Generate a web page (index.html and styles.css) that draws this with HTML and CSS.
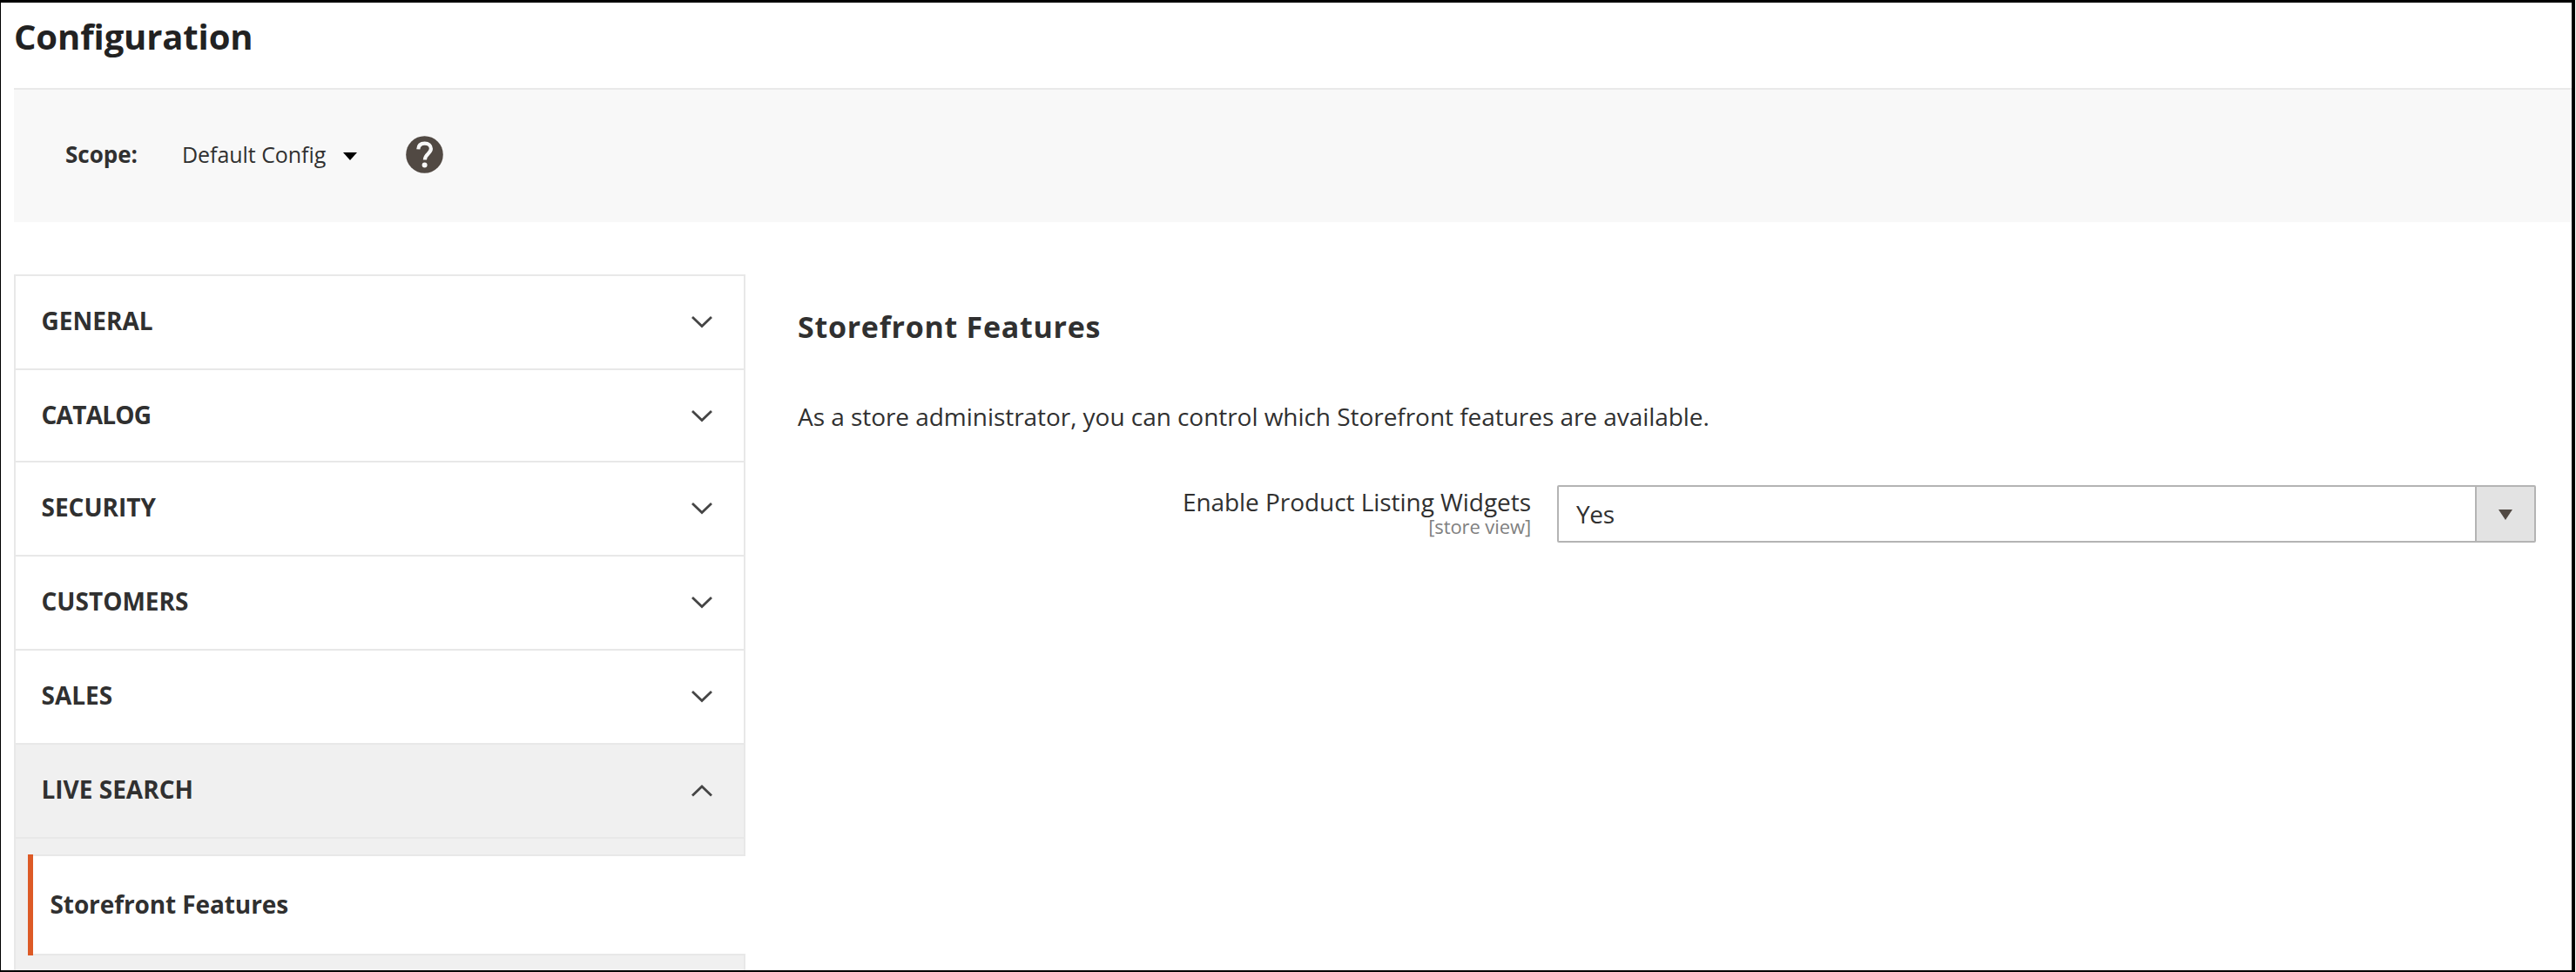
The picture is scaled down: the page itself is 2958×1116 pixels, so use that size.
FILE: index.html
```html
<!DOCTYPE html>
<html lang="en">
<head>
<meta charset="utf-8">
<title>Configuration</title>
<link rel="stylesheet" href="styles.css">
</head>
<body>
<div class="frame">
  <h1 class="page-title">Configuration</h1>
  <div class="scope-bar">
    <span class="scope-label">Scope:</span>
    <span class="scope-value">Default Config</span>
    <svg class="scope-caret" width="16" height="9" viewBox="0 0 16 9"><path d="M0 0h16L8 9z" fill="#000"/></svg>
    <svg class="help" width="43" height="43" viewBox="0 0 43 43"><circle cx="21.5" cy="21.5" r="21.3" fill="#514943"/><path d="M14.3 15.3C14.5 10.6 17.6 8.6 21.7 8.6c4.2 0 7.2 2.5 7.2 6.2 0 5.4-7 6.1-7 12.6" fill="none" stroke="#f8f8f8" stroke-width="4.2"/><circle cx="21.6" cy="33.5" r="3" fill="#f8f8f8"/></svg>
  </div>
  <div class="columns">
    <nav class="sidebar">
      <div class="tab"><span>GENERAL</span><svg class="chevron" width="26" height="16" viewBox="0 0 26 16"><path d="M2 2l11 10.500L24 2"/></svg></div>
      <div class="tab short"><span class="tight">CATALOG</span><svg class="chevron" width="26" height="16" viewBox="0 0 26 16"><path d="M2 2l11 10.500L24 2"/></svg></div>
      <div class="tab"><span>SECURITY</span><svg class="chevron" width="26" height="16" viewBox="0 0 26 16"><path d="M2 2l11 10.500L24 2"/></svg></div>
      <div class="tab"><span>CUSTOMERS</span><svg class="chevron" width="26" height="16" viewBox="0 0 26 16"><path d="M2 2l11 10.500L24 2"/></svg></div>
      <div class="tab"><span>SALES</span><svg class="chevron" width="26" height="16" viewBox="0 0 26 16"><path d="M2 2l11 10.500L24 2"/></svg></div>
      <div class="tab open"><span>LIVE SEARCH</span><svg class="chevron" width="26" height="16" viewBox="0 0 26 16"><path d="M2 13.500l11-10.500 11 10.500"/></svg></div>
      <div class="gap top"></div>
      <div class="sub"><div class="item"><span>Storefront Features</span></div></div>
      <div class="gap bottom"></div>
    </nav>
    <main class="content">
      <h2 class="section-title">Storefront Features</h2>
      <p class="intro">As a store administrator, you can control which Storefront features are available.</p>
      <div class="field">
        <div class="field-label"><span class="name">Enable Product Listing Widgets</span><span class="hint">[store view]</span></div>
        <div class="select"><div class="select-value">Yes</div><div class="select-button"><svg width="16" height="12" viewBox="0 0 16 12"><path d="M0 0h16L8 12z" fill="#514943"/></svg></div></div>
      </div>
    </main>
  </div>
</div>
</body>
</html>
```

FILE: styles.css
```css
* { box-sizing: border-box; }
body {
  margin: 0;
  background: #fff;
  color: #303030;
  font-family: "Open Sans", "Noto Sans", sans-serif;
}
.frame {
  width: 2957px;
  height: 1116px;
  overflow: hidden;
  border: solid #000;
  border-width: 3px 4px 2px 1px;
  padding-left: 15px;
}
.page-title {
  margin: 0;
  height: 98px;
  padding-top: 12px;
  font-size: 40px;
  font-weight: 700;
  letter-spacing: -0.12px;
  line-height: 54px;
  color: #222;
}
.scope-bar {
  display: flex;
  align-items: center;
  height: 154px;
  padding: 0 0 3px 59px;
  background: #f8f8f8;
  border-top: 2px solid #e9e9e9;
  font-size: 25px;
  line-height: 34px;
}
.scope-label { width: 134px; padding-bottom: 1px; font-size: 26px; font-weight: 700; }
.scope-value { width: 185px; padding-bottom: 2px; letter-spacing: -0.05px; }
.scope-caret { margin-top: 3px; }
.help { margin-left: 56px; }
.columns { display: flex; padding-top: 60px; }
.sidebar { width: 840px; border: 2px solid #e8e8e8; border-bottom: 0; border-right: 0; }
.tab {
  display: flex;
  align-items: center;
  justify-content: space-between;
  height: 108px;
  padding: 0 35.5px 4px 29.5px;
  border-bottom: 2px solid #e8e8e8;
  border-right: 2px solid #e8e8e8;
  font-size: 28px;
  font-weight: 700;
}
.short { height: 106px; padding-bottom: 2px; }
.tight { letter-spacing: -0.75px; }
.open, .gap { background: #f0f0f0; }
.chevron { margin-top: 3px; }
.chevron path { fill: none; stroke: #454545; stroke-width: 2.8; }
.gap { border-right: 2px solid #e8e8e8; height: 20px; }
.gap.top { border-bottom: 2px solid #e8e8e8; border-bottom-right-radius: 2px; }
.gap.bottom { border-top: 2px solid #e8e8e8; border-top-right-radius: 2px; }
.sub { padding-left: 14px; background: #f0f0f0; margin: -2px 0; position: relative; }
.item {
  display: flex;
  align-items: center;
  height: 116px;
  padding: 0 0 2px 19.5px;
  background: linear-gradient(#e8e8e8 2px, #fff 2px 114px, #e8e8e8 114px);
  border-left: 6px solid #dd5a26;
  font-size: 28px;
  font-weight: 700;
  letter-spacing: -0.1px;
}
.content { width: 2057px; padding-left: 60px; }
.section-title {
  margin: 0;
  padding-top: 35px;
  font-size: 34px;
  font-weight: 700;
  letter-spacing: 0.72px;
  line-height: 50px;
}
.intro { margin: 59px 0 0; font-size: 28px; letter-spacing: -0.045px; line-height: 38px; }
.field { display: flex; margin-top: 60px; }
.field-label { width: 842px; text-align: right; }
.name, .hint { display: block; }
.name { padding-top: 1px; font-size: 28px; letter-spacing: -0.05px; line-height: 36px; }
.hint { font-size: 22px; letter-spacing: -0.1px; line-height: 20px; color: #808080; }
.select {
  display: flex;
  width: 1124px;
  height: 66px;
  margin-left: 30px;
  border: 2px solid #b4b4b4;
  border-radius: 2px;
}
.select-value { flex: 1; padding-left: 20px; font-size: 28px; letter-spacing: -0.3px; line-height: 62px; }
.select-button {
  display: flex;
  align-items: center;
  justify-content: center;
  width: 68px;
  background: #e3e3e3;
  border-left: 2px solid #b4b4b4;
}
.select-button svg { margin-top: 1px; }
```
